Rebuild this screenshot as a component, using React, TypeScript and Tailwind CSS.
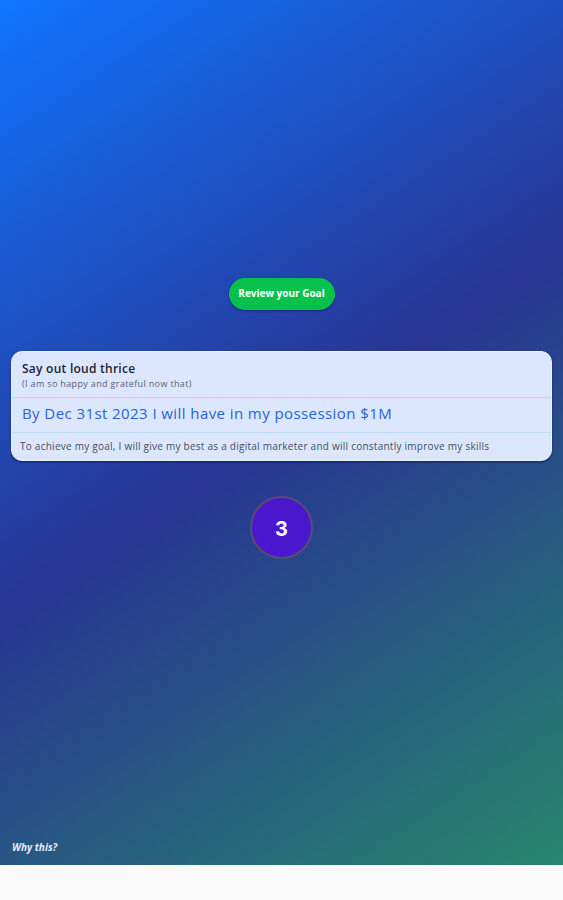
const Goal = () => {
    return (
        <section className="w-[541px] h-[110px] mx-auto mt-[41px] rounded-[11px] border border-[#edf3ff] bg-[#dce7ff] shadow-[0_1px_2px_rgba(10,20,90,0.8)] overflow-hidden whitespace-nowrap">
            {/* Heading */}
            <div className="h-[46px] pl-[10px] pt-[9px] border-b border-[#b2d8fb]">
                <h2 className="text-[12px] leading-[16px] font-semibold tracking-[0.25px] text-[#1b2333]">
                    Say out loud thrice
                </h2>
                <p className="text-[9px] leading-[14px] tracking-[0.35px] text-[#565f73]">
                    (I am so happy and grateful now that)
                </p>
            </div>

            {/* Goal */}
            <p className="h-[35px] pl-[10px] text-[15px] leading-[31px] tracking-[0.42px] text-[#2463d6] border-b border-[#b9dcf5]">
                By Dec 31st 2023 I will have in my possession $1M
            </p>

            {/* Plan */}
            <p className="pl-[8px] text-[10px] leading-[27px] tracking-[0.25px] text-[#454d60]">
                To achieve my goal, I will give my best as a digital marketer and will constantly improve my skills
            </p>
        </section>
    );
};

const App = () => {
    return (
        <div className="h-[900px] bg-[#fafafa] font-['Open_Sans',sans-serif]">
            <main className="h-[865px] flex flex-col bg-[linear-gradient(147deg,#0f75ff_0%,#283593_50%,#26866c_100%)]">
                <button className="w-[106px] h-[32px] mx-auto mt-[278px] pb-px rounded-full bg-[#07c14c] text-[10px] font-bold text-white whitespace-nowrap shadow-[0_1px_2px_rgba(10,20,90,0.6)]">
                    Review your Goal
                </button>

                <Goal />

                {/* Remaining count */}
                <button className="size-[63px] mx-auto mt-[35px] pt-[2px] rounded-full border-2 border-[#574a78] bg-[#4a17cf] font-['Inter',sans-serif] text-[20px] font-bold text-white">
                    3
                </button>

                <a className="mt-auto mb-[10px] ml-[12px] self-start text-[10px] leading-[16px] font-bold italic text-[#e9e8f5]">
                    Why this?
                </a>
            </main>
        </div>
    );
};

export default App;
